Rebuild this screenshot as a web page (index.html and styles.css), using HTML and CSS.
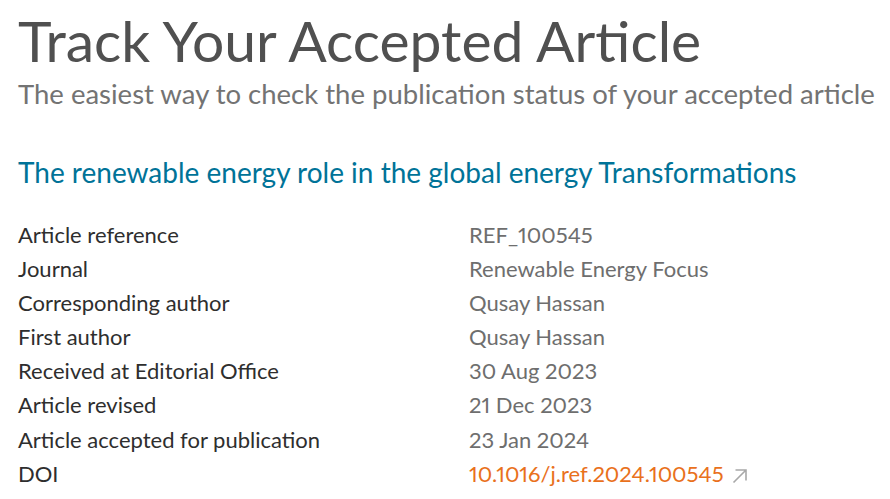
FILE: index.html
```html
<!DOCTYPE html>
<html lang="en">
<head>
<meta charset="utf-8">
<title>Track Your Accepted Article</title>
<link rel="stylesheet" href="styles.css">
</head>
<body>
<main class="page">
  <header class="intro">
    <h1 class="title">Track Your Accepted Article</h1>
    <p class="subtitle">The easiest way to check the publication status of your accepted article</p>
  </header>
  <section class="article">
    <h2 class="article-title">The renewable energy role in the global energy Transformations</h2>
    <dl class="details">
      <dt>Article reference</dt><dd>REF_100545</dd>
      <dt>Journal</dt><dd>Renewable Energy Focus</dd>
      <dt>Corresponding author</dt><dd>Qusay Hassan</dd>
      <dt>First author</dt><dd>Qusay Hassan</dd>
      <dt>Received at Editorial Office</dt><dd>30 Aug 2023</dd>
      <dt>Article revised</dt><dd>21 Dec 2023</dd>
      <dt>Article accepted for publication</dt><dd>23 Jan 2024</dd>
      <dt>DOI</dt><dd><a class="doi" href="#">10.1016/j.ref.2024.100545<svg class="ext" width="16" height="16" viewBox="0 0 16 16" aria-hidden="true"><path d="M1.5 14.5 L14 2 M3.5 2 H14 V12.5" fill="none" stroke="#a8a8a8" stroke-width="1.6"/></svg></a></dd>
    </dl>
  </section>
</main>
</body>
</html>
```
FILE: styles.css
```css
html, body { margin: 0; padding: 0; background: #fff; }
body { font-family: Lato, "Open Sans", sans-serif; font-variant-numeric: proportional-nums; }
.page { padding: 7px 0 0 18px; }
.title { margin: 0; font-weight: 400; font-size: 57px; line-height: 66px; color: #505050; }
.subtitle { margin: 6px 0 0; font-size: 27.5px; line-height: 30px; color: #737373; white-space: nowrap; }
.article-title { margin: 46px 0 0; font-weight: 400; font-size: 28px; line-height: 34px; color: #007398; white-space: nowrap; }
.details { margin: 28.5px 0 0; display: grid; grid-template-columns: 451px 1fr; grid-auto-rows: 34.2px; font-size: 22px; line-height: 34.2px; }
.details dt { color: #2e2e2e; }
.details dd { margin: 0; color: #6e6e6e; }
.doi { color: #e9711c; text-decoration: none; }
.ext { margin-left: 8px; vertical-align: -2px; }
```
